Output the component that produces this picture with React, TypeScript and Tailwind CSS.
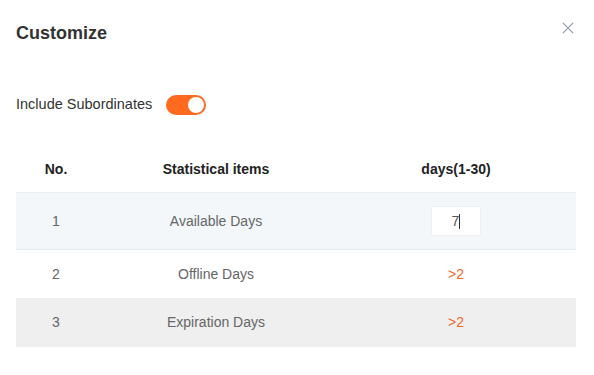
const rows = [
  { no: 1, name: "Available Days", value: "7", editing: true },
  { no: 2, name: "Offline Days", value: ">2", editing: false },
  { no: 3, name: "Expiration Days", value: ">2", editing: false },
];

export default function App() {
  return (
    <div
      className="w-[594px] h-[375px] bg-white relative"
      style={{ fontFamily: '"Liberation Sans", Arial, sans-serif' }}
    >
      <button className="absolute right-[20px] top-[22px] text-gray-400">
        <svg width="12" height="12" viewBox="0 0 12 12" fill="none" stroke="currentColor" strokeWidth="1.1">
          <path d="M1 1L11 11M11 1L1 11" />
        </svg>
      </button>
      <div className="px-4">
        <h1 className="pt-[22px] text-[18px] leading-[22px] font-bold text-[#333]">Customize</h1>
        <div className="mt-[51px] flex items-center h-[20px]">
          <span className="text-[14.5px] text-[#333]">Include Subordinates</span>
          <div className="ml-[14px] w-[40px] h-[20px] rounded-full bg-[#ff6a1f] relative">
            <div className="absolute right-[2px] top-[2px] w-[16px] h-[16px] rounded-full bg-white" />
          </div>
        </div>
        <div className="mt-[32px] w-[560px]">
          <div className="grid grid-cols-[80px_240px_240px] h-[46px] items-center text-[14px] font-bold text-[#222] text-center border-b border-[#eceff2]">
            <div>No.</div>
            <div>Statistical items</div>
            <div>days(1-30)</div>
          </div>
          {rows.map((r) => (
            <div
              key={r.no}
              className={
                "grid grid-cols-[80px_240px_240px] items-center text-[14px] text-[#666] text-center " +
                (r.no === 1
                  ? "h-[57px] bg-[#f3f7fa] border-b border-[#e6eaee]"
                  : r.no === 2
                  ? "h-[48px] bg-white"
                  : "h-[49px] bg-[#efefef]")
              }
            >
              <div>{r.no}</div>
              <div>{r.name}</div>
              <div className="flex justify-center">
                {r.editing ? (
                  <div className="w-[50px] h-[30px] bg-white border border-[#eef0f2] flex items-center justify-center text-[#555]">
                    <span>{r.value}</span>
                    <span className="w-px h-[15px] bg-[#333]" />
                  </div>
                ) : (
                  <span className="text-[#f06a2a]">{r.value}</span>
                )}
              </div>
            </div>
          ))}
        </div>
      </div>
    </div>
  );
}
